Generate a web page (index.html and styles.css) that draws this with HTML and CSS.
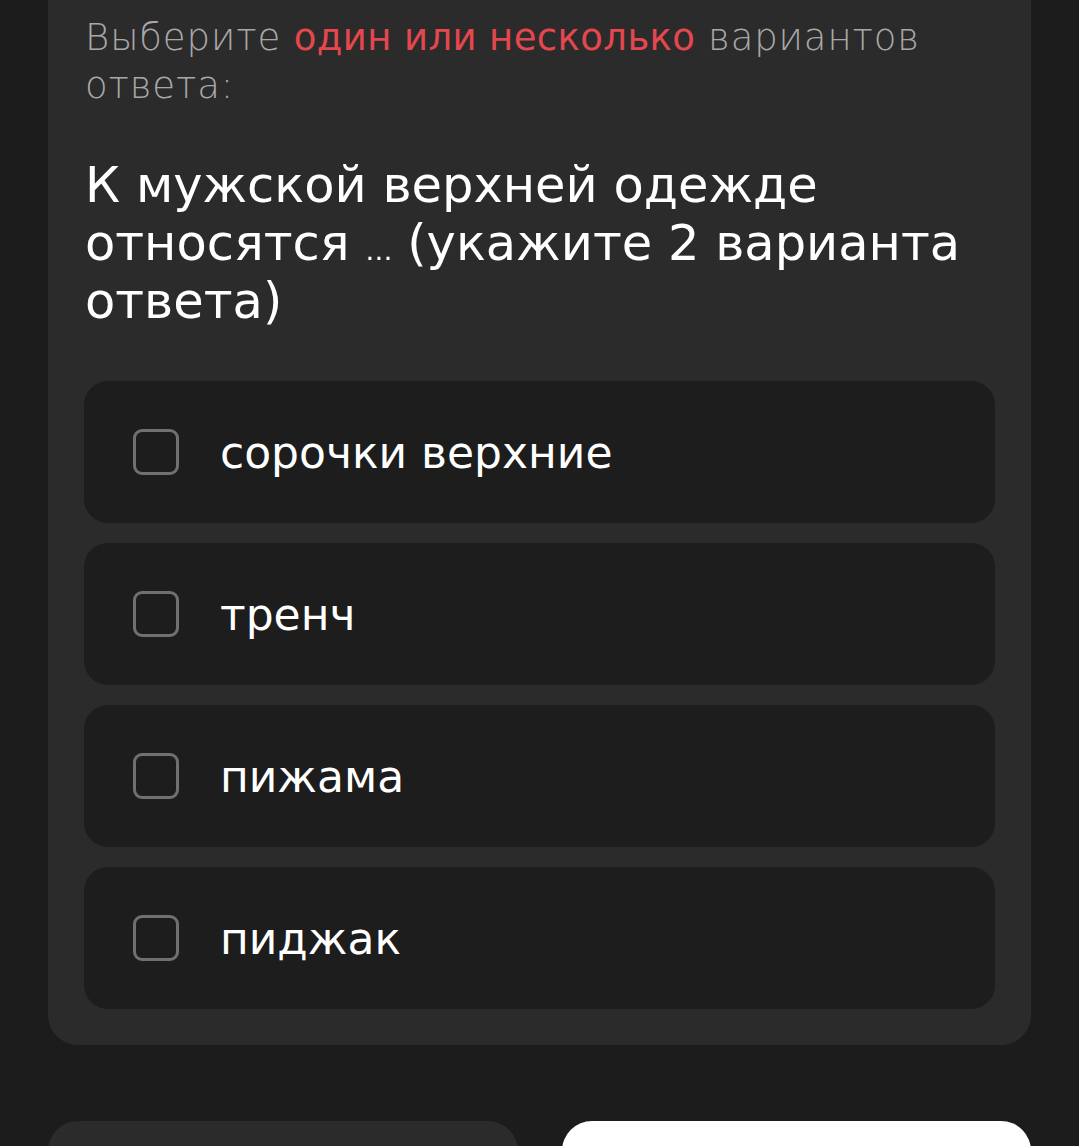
FILE: index.html
```html
<!DOCTYPE html>
<html lang="ru">
<head>
<meta charset="utf-8">
<link rel="stylesheet" href="styles.css">
</head>
<body>
<main class="page">
  <section class="card">
    <p class="hint">Выберите <span class="accent">один или несколько</span> вариантов ответа:</p>
    <h1 class="question">К мужской верхней одежде относятся <span class="ellipsis">…</span> (укажите 2 варианта ответа)</h1>
    <div class="options">
      <label class="option"><span class="box"></span><span class="label">сорочки верхние</span></label>
      <label class="option"><span class="box"></span><span class="label">тренч</span></label>
      <label class="option"><span class="box"></span><span class="label">пижама</span></label>
      <label class="option"><span class="box"></span><span class="label">пиджак</span></label>
    </div>
  </section>
  <div class="actions">
    <div class="btn btn-dark"></div>
    <div class="btn btn-light"></div>
  </div>
</main>
</body>
</html>
```
FILE: styles.css
```css
html, body {
  margin: 0;
  padding: 0;
  background: #1c1c1c;
  height: 1146px;
  overflow: hidden;
}
body {
  font-family: "DejaVu Sans", "Noto Sans", sans-serif;
}
.page {
  padding: 0 48px;
  height: 1146px;
  overflow: hidden;
}
.card {
  background: #2b2b2b;
  border-radius: 0 0 30px 30px;
  margin-top: -22px;
  padding: 36px 36px 36px 37px;
}
.hint {
  margin: 0;
  font-size: 37px;
  line-height: 48px;
  letter-spacing: 0.9px;
  font-weight: 200;
  color: #a8a8a8;
}
.accent {
  color: #e5474f;
  font-weight: 400;
  letter-spacing: 0.4px;
}
.question {
  margin: 46px 0 0;
  font-size: 49.5px;
  line-height: 58px;
  font-weight: 500;
  color: #ffffff;
}
.ellipsis {
  font-size: 0.55em;
  line-height: 0;
  letter-spacing: -1px;
}
.options {
  margin-top: 51px;
  display: flex;
  flex-direction: column;
  gap: 20px;
  margin-left: -1px;
}
.option {
  display: flex;
  align-items: center;
  height: 142px;
  background: #1d1d1d;
  border-radius: 24px;
  padding-left: 49px;
  box-sizing: border-box;
}
.box {
  width: 46px;
  height: 46px;
  box-sizing: border-box;
  border: 3px solid #707070;
  border-radius: 9px;
  flex: none;
}
.label {
  margin-left: 41px;
  font-size: 44px;
  color: #ffffff;
  font-weight: 400;
}
.actions {
  display: flex;
  gap: 44px;
  margin-top: 76px;
}
.btn {
  flex: 1;
  height: 80px;
  border-radius: 30px;
}
.btn-dark { background: #2b2b2b; }
.btn-light { background: #ffffff; }
```
